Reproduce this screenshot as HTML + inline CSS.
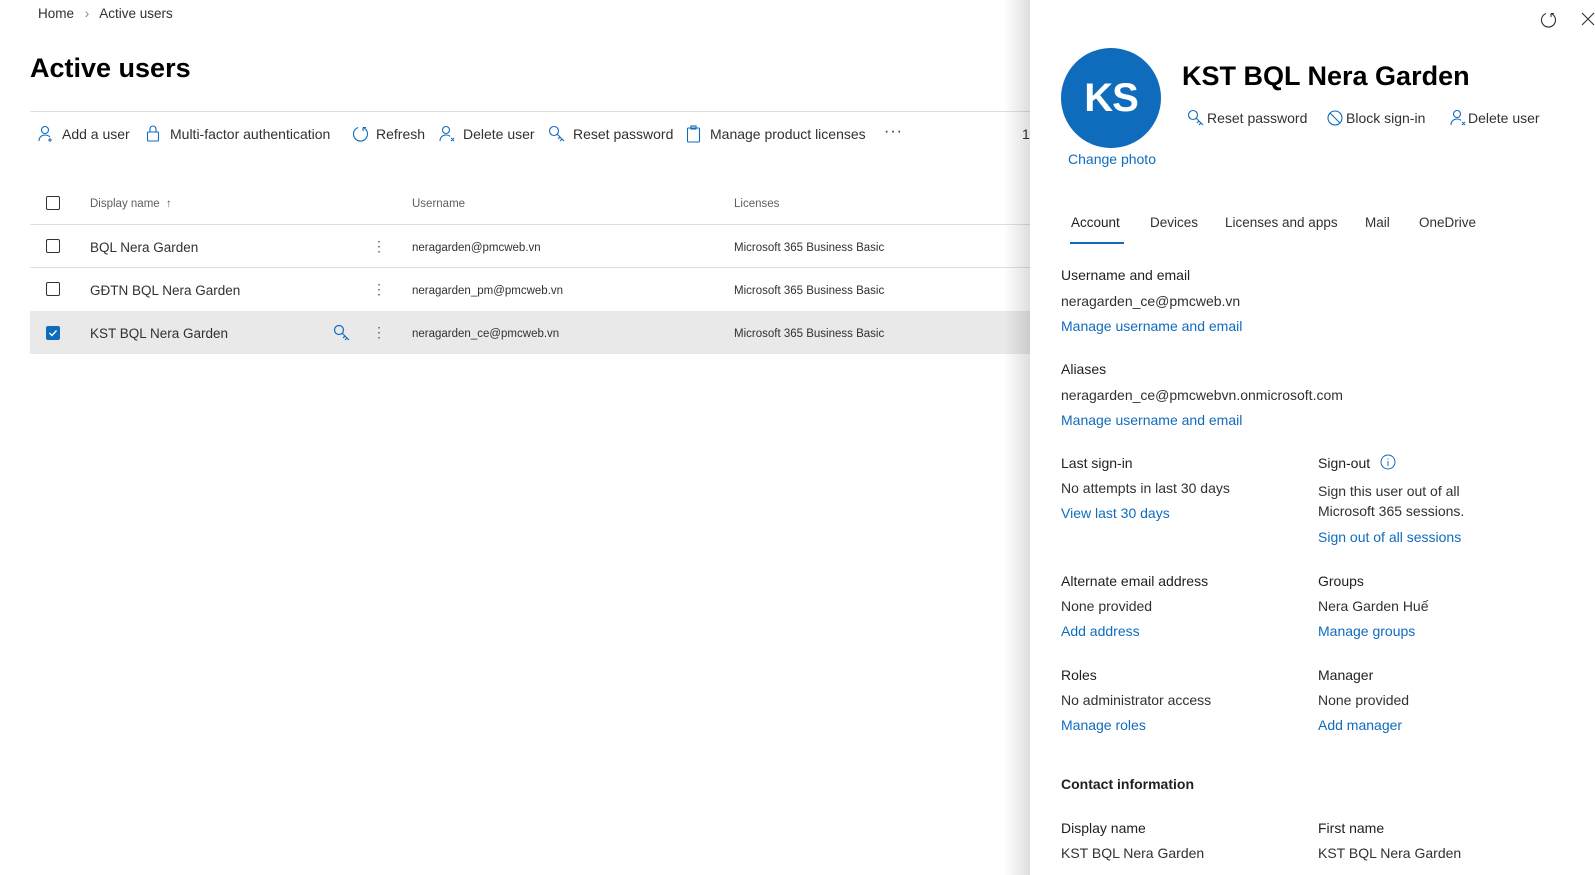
<!DOCTYPE html>
<html><head><meta charset="utf-8"><style>
*{margin:0;padding:0;box-sizing:border-box}
body{width:1595px;height:875px;overflow:hidden;background:#fff;font-family:"Liberation Sans",sans-serif;color:#323130;position:relative}
.a{position:absolute;white-space:nowrap;line-height:20px}
.hl{position:absolute;left:30px;width:1010px;height:1px;background:#e1dfdd}
.cb{position:absolute;width:14px;height:14px;border:1px solid #323130;border-radius:2px;background:#fff}
.lk{color:#0f6cbd}
.p{font-size:14px}
svg{position:absolute}
</style></head><body>
<div class="a" style="left:38px;top:4px;font-size:13.5px">Home <span style="color:#8a8886;margin:0 7px">&#x203A;</span> Active users</div>
<div class="a" style="left:30px;top:52px;font-size:27px;font-weight:bold;color:#000;line-height:32px">Active users</div>
<div class="hl" style="top:111px"></div>

<!-- toolbar -->
<svg style="left:38px;top:125px" width="16" height="18" viewBox="0 0 16 18" fill="none" stroke="#0f6cbd" stroke-width="1.1"><circle cx="7" cy="5" r="3.5"/><path d="M1 16c0-4 3-6 6-6s4 1 5 2M12 13v4M10 15h4"/></svg>
<div class="a" style="left:62px;top:124px;font-size:14px">Add a user</div>
<svg style="left:146px;top:124px" width="14" height="18" viewBox="0 0 14 18" fill="none" stroke="#0f6cbd" stroke-width="1.1"><rect x="1.5" y="8" width="11" height="9" rx="1"/><path d="M4 8V5a3 3 0 0 1 6 0v3"/></svg>
<div class="a" style="left:170px;top:124px;font-size:14px">Multi-factor authentication</div>
<svg style="left:352px;top:125px" width="18" height="18" viewBox="0 0 18 18" fill="none" stroke="#0f6cbd" stroke-width="1.1"><path d="M6 2.5A7 7 0 1 0 11 2.5M11 2.5V6M11 2.5h3"/></svg>
<div class="a" style="left:376px;top:124px;font-size:14px">Refresh</div>
<svg style="left:439px;top:125px" width="18" height="18" viewBox="0 0 18 18" fill="none" stroke="#0f6cbd" stroke-width="1.1"><circle cx="7" cy="5" r="3.5"/><path d="M1 16c0-4 3-6 6-6s3 .5 4 1.5M12 13l3 3M15 13l-3 3"/></svg>
<div class="a" style="left:463px;top:124px;font-size:14px">Delete user</div>
<svg style="left:548px;top:125px" width="18" height="18" viewBox="0 0 18 18" fill="none" stroke="#0f6cbd" stroke-width="1.1"><circle cx="6" cy="6" r="4.5"/><path d="M9 9l7 7M12 12l-2 2M14 14l-2 2"/></svg>
<div class="a" style="left:573px;top:124px;font-size:14px">Reset password</div>
<svg style="left:686px;top:125px" width="16" height="18" viewBox="0 0 16 18" fill="none" stroke="#0f6cbd" stroke-width="1.1"><rect x="1.5" y="3" width="12" height="14" rx="1"/><rect x="5" y="1" width="5" height="3"/></svg>
<div class="a" style="left:710px;top:124px;font-size:14px">Manage product licenses</div>
<div class="a" style="left:884px;top:122px;font-size:16px;letter-spacing:1px">&middot;&middot;&middot;</div>
<div class="a" style="left:1022px;top:124px;font-size:14px">1 s</div>

<!-- table -->
<div class="cb" style="left:46px;top:196px"></div>
<div class="a" style="left:90px;top:194px;font-size:11.5px;color:#605e5c">Display name &nbsp;&#x2191;</div>
<div class="a" style="left:412px;top:194px;font-size:11.5px;color:#605e5c">Username</div>
<div class="a" style="left:734px;top:194px;font-size:11.5px;color:#605e5c">Licenses</div>
<div class="hl" style="top:224px"></div>
<div class="cb" style="left:46px;top:239px"></div>
<div class="a" style="left:90px;top:238px;font-size:13.5px">BQL Nera Garden</div>
<div class="a" style="left:372px;top:236px;font-size:14px;color:#605e5c">&#8942;</div>
<div class="a" style="left:412px;top:238px;font-size:11.5px">neragarden@pmcweb.vn</div>
<div class="a" style="left:734px;top:238px;font-size:11.5px">Microsoft 365 Business Basic</div>
<div class="hl" style="top:267px"></div>
<div class="cb" style="left:46px;top:282px"></div>
<div class="a" style="left:90px;top:281px;font-size:13.5px">GĐTN BQL Nera Garden</div>
<div class="a" style="left:372px;top:279px;font-size:14px;color:#605e5c">&#8942;</div>
<div class="a" style="left:412px;top:281px;font-size:11.5px">neragarden_pm@pmcweb.vn</div>
<div class="a" style="left:734px;top:281px;font-size:11.5px">Microsoft 365 Business Basic</div>
<div style="position:absolute;left:30px;top:311px;width:1010px;height:43px;background:#e9e9e9"></div>
<div class="cb" style="left:46px;top:326px;background:#0f6cbd;border-color:#0f6cbd"></div>
<svg style="left:48px;top:328px" width="10" height="10" viewBox="0 0 10 10" fill="none" stroke="#fff" stroke-width="1.4"><path d="M1.5 5l2.5 2.5 4.5-5"/></svg>
<div class="a" style="left:90px;top:324px;font-size:13.5px">KST BQL Nera Garden</div>
<svg style="left:333px;top:324px" width="18" height="18" viewBox="0 0 18 18" fill="none" stroke="#0f6cbd" stroke-width="1.2"><circle cx="6" cy="6" r="4.5"/><path d="M9 9l7 7M12 12l-2 2M14 14l-2 2"/></svg>
<div class="a" style="left:372px;top:322px;font-size:14px;color:#605e5c">&#8942;</div>
<div class="a" style="left:412px;top:324px;font-size:11.5px">neragarden_ce@pmcweb.vn</div>
<div class="a" style="left:734px;top:324px;font-size:11.5px">Microsoft 365 Business Basic</div>

<!-- panel -->
<div style="position:absolute;left:1004px;top:0;width:26px;height:875px;background:linear-gradient(to right,rgba(0,0,0,0),rgba(0,0,0,.13))"></div>
<div style="position:absolute;left:1030px;top:0;width:565px;height:875px;background:#fff"></div>
<svg style="left:1540px;top:11px" width="18" height="18" viewBox="0 0 18 18" fill="none" stroke="#323130" stroke-width="1.1"><path d="M6 2.5A7 7 0 1 0 11 2.5M11 2.5V6M11 2.5h3"/></svg>
<svg style="left:1581px;top:12px" width="14" height="14" viewBox="0 0 14 14" stroke="#323130" stroke-width="1.1"><path d="M1 1l12 12M13 1L1 13"/></svg>
<div style="position:absolute;left:-6px;top:0;width:1595px;height:875px">
<div style="position:absolute;left:1067px;top:48px;width:100px;height:100px;border-radius:50%;background:#0f6cbd;color:#fff;font-size:40px;font-weight:bold;text-align:center;line-height:100px;letter-spacing:-1px">KS</div>
<div class="a lk p" style="left:1068px;top:149px;width:100px;text-align:center">Change photo</div>
<div class="a" style="left:1188px;top:58px;font-size:27px;font-weight:bold;color:#000;line-height:36px">KST BQL Nera Garden</div>
<svg style="left:1193px;top:109px" width="18" height="18" viewBox="0 0 18 18" fill="none" stroke="#0f6cbd" stroke-width="1.1"><circle cx="6" cy="6" r="4.5"/><path d="M9 9l7 7M12 12l-2 2M14 14l-2 2"/></svg>
<div class="a p" style="left:1213px;top:108px">Reset password</div>
<svg style="left:1333px;top:110px" width="16" height="16" viewBox="0 0 16 16" fill="none" stroke="#0f6cbd" stroke-width="1.1"><circle cx="8" cy="8" r="7"/><path d="M3 3l10 10"/></svg>
<div class="a p" style="left:1352px;top:108px">Block sign-in</div>
<svg style="left:1456px;top:109px" width="18" height="18" viewBox="0 0 18 18" fill="none" stroke="#0f6cbd" stroke-width="1.1"><circle cx="7" cy="5" r="3.5"/><path d="M1 16c0-4 3-6 6-6s3 .5 4 1.5M12 13l3 3M15 13l-3 3"/></svg>
<div class="a p" style="left:1474px;top:108px">Delete user</div>

<div class="a" style="left:1077px;top:213px;color:#201f1e;font-size:13.5px">Account</div>
<div style="position:absolute;left:1076px;top:242px;width:54px;height:2px;background:#0f6cbd"></div>
<div class="a" style="left:1156px;top:213px;font-size:13.5px">Devices</div>
<div class="a" style="left:1231px;top:213px;font-size:13.5px">Licenses and apps</div>
<div class="a" style="left:1371px;top:213px;font-size:13.5px">Mail</div>
<div class="a" style="left:1425px;top:213px;font-size:13.5px">OneDrive</div>

<div class="a p" style="left:1067px;top:265px;color:#201f1e">Username and email</div>
<div class="a p" style="left:1067px;top:291px">neragarden_ce@pmcweb.vn</div>
<div class="a p lk" style="left:1067px;top:316px">Manage username and email</div>
<div class="a p" style="left:1067px;top:359px;color:#201f1e">Aliases</div>
<div class="a p" style="left:1067px;top:385px">neragarden_ce@pmcwebvn.onmicrosoft.com</div>
<div class="a p lk" style="left:1067px;top:410px">Manage username and email</div>
<div class="a p" style="left:1067px;top:453px;color:#201f1e">Last sign-in</div>
<div class="a p" style="left:1067px;top:478px">No attempts in last 30 days</div>
<div class="a p lk" style="left:1067px;top:503px">View last 30 days</div>
<div class="a p" style="left:1324px;top:453px;color:#201f1e">Sign-out</div>
<svg style="left:1386px;top:454px" width="16" height="16" viewBox="0 0 16 16" fill="none" stroke="#0f6cbd" stroke-width="1"><circle cx="8" cy="8" r="7"/><path d="M8 7v5M8 4.5v1"/></svg>
<div class="a p" style="left:1324px;top:481px">Sign this user out of all</div>
<div class="a p" style="left:1324px;top:501px">Microsoft 365 sessions.</div>
<div class="a p lk" style="left:1324px;top:527px">Sign out of all sessions</div>
<div class="a p" style="left:1067px;top:571px;color:#201f1e">Alternate email address</div>
<div class="a p" style="left:1067px;top:596px">None provided</div>
<div class="a p lk" style="left:1067px;top:621px">Add address</div>
<div class="a p" style="left:1324px;top:571px;color:#201f1e">Groups</div>
<div class="a p" style="left:1324px;top:596px">Nera Garden Huế</div>
<div class="a p lk" style="left:1324px;top:621px">Manage groups</div>
<div class="a p" style="left:1067px;top:665px;color:#201f1e">Roles</div>
<div class="a p" style="left:1067px;top:690px">No administrator access</div>
<div class="a p lk" style="left:1067px;top:715px">Manage roles</div>
<div class="a p" style="left:1324px;top:665px;color:#201f1e">Manager</div>
<div class="a p" style="left:1324px;top:690px">None provided</div>
<div class="a p lk" style="left:1324px;top:715px">Add manager</div>
<div class="a p" style="left:1067px;top:774px;font-weight:bold;color:#201f1e">Contact information</div>
<div class="a p" style="left:1067px;top:818px;color:#201f1e">Display name</div>
<div class="a p" style="left:1067px;top:843px">KST BQL Nera Garden</div>
<div class="a p" style="left:1324px;top:818px;color:#201f1e">First name</div>
<div class="a p" style="left:1324px;top:843px">KST BQL Nera Garden</div>
</div>
</body></html>
